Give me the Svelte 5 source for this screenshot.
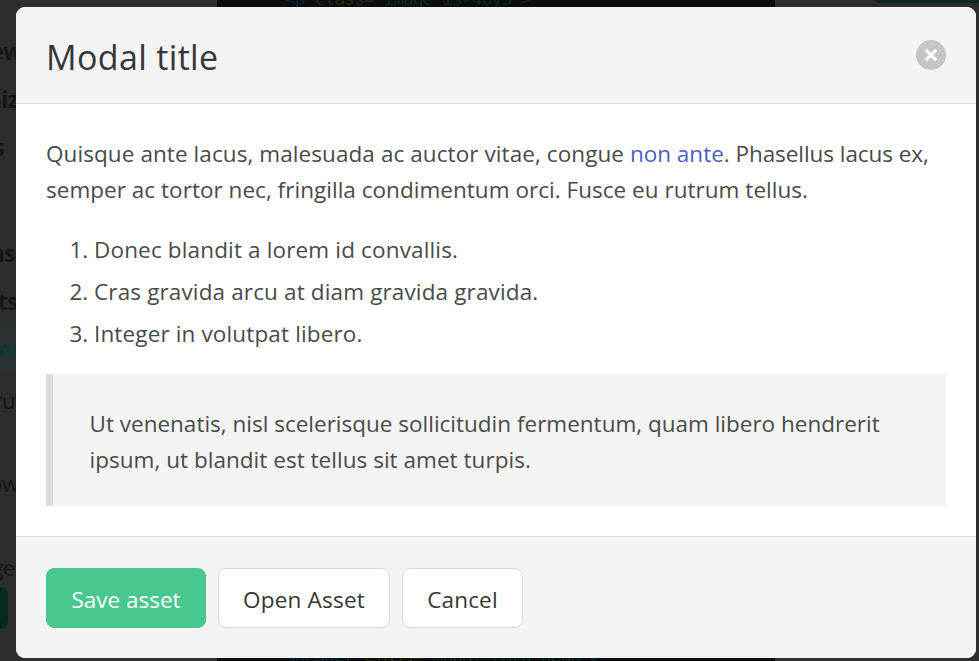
<script>
  const items = [
    { text: 'Donec blandit a lorem id convallis.', track: 0.15 },
    { text: 'Cras gravida arcu at diam gravida gravida.', track: 0.14 },
    { text: 'Integer in volutpat libero.', track: 0.14 }
  ];
  const buttons = [
    { text: 'Save asset', kind: 'success', width: 160, track: 0 },
    { text: 'Open Asset', kind: '', width: 172, track: 0.2 },
    { text: 'Cancel', kind: '', width: 121, track: 0.15 }
  ];
  const menu = [
    { text: 'Overview', top: 34, bold: true, edge: 22 },
    { text: 'Customize', top: 82, bold: true, edge: 31 },
    { text: 'Columns', top: 130, bold: true, edge: 4 },
    { text: 'Columns', top: 236, bold: true, edge: 15 },
    { text: 'Elements', top: 284, bold: true, edge: 18 },
    { text: 'Components', top: 332, bold: true, edge: 58, active: true },
    { text: 'Breadcru', top: 383, edge: 15 },
    { text: 'Dropdow', top: 466, edge: 19 },
    { text: 'Message', top: 550, edge: 15 }
  ];
</script>

<div class="screen">
  <div class="page" aria-hidden="true">
    <div class="active-row"></div>
    {#each menu as m}
      <span class="menu" class:bold={m.bold} class:active={m.active} style="top: {m.top}px; right: {979 - m.edge}px">{m.text}</span>
    {/each}
    <div class="code"></div>
    <div class="line first"><i class="tag">&lt;p</i> <i class="attr">class=</i><i class="str">"image is-4by3"</i><i class="tag">&gt;</i></div>
    <div class="line last"><i class="tag">&lt;header</i> <i class="attr">class=</i><i class="str">"modal-card-head"</i><i class="tag">&gt;</i></div>
    <div class="pill top"></div>
    <div class="pill side"></div>
  </div>

  <div class="card" role="dialog" aria-modal="true" aria-label="Modal title">
    <header>
      <p class="title">Modal title</p>
      <button class="close" aria-label="close">
        <svg viewBox="0 0 30 30" width="30" height="30"><path d="M9.7 9.7 20.3 20.3M20.3 9.7 9.7 20.3" stroke="#fff" stroke-width="3" fill="none" /></svg>
      </button>
    </header>
    <section>
      <p class="para">
        <span style="letter-spacing: 0.08px">Quisque ante lacus, malesuada ac auctor vitae, congue</span>{' '}<a href="#top">non ante</a><span style="letter-spacing: -0.059px">. Phasellus lacus ex,</span><br />
        <span style="letter-spacing: 0.029px">semper ac tortor nec, fringilla condimentum orci. Fusce eu rutrum tellus.</span>
      </p>
      <ol>
        {#each items as item}
          <li><span style="letter-spacing: {item.track}px">{item.text}</span></li>
        {/each}
      </ol>
      <blockquote>
        <span>Ut venenatis, nisl scelerisque sollicitudin fermentum, quam libero hendrerit</span><br />
        <span style="letter-spacing: 0.03px">ipsum, ut blandit est tellus sit amet turpis.</span>
      </blockquote>
    </section>
    <footer>
      {#each buttons as b}
        <button class="button {b.kind}" style="width: {b.width}px; letter-spacing: {b.track}px">{b.text}</button>
      {/each}
    </footer>
  </div>
</div>

<style>
  :global(body) {
    margin: 0;
    background: #2d2d2d;
  }
  .screen {
    position: relative;
    box-sizing: border-box;
    width: 979px;
    height: 661px;
    padding: 7px 3px 3px 16px;
    overflow: hidden;
    background: #2d2d2d;
    color: #4a4a4a;
    font: 22.5px/36px 'Open Sans', 'Noto Sans', sans-serif;
  }
  .page {
    position: absolute;
    inset: 0;
  }
  .menu {
    position: absolute;
    line-height: 36px;
    letter-spacing: -0.5px;
    white-space: nowrap;
    color: #161616;
  }
  .bold { font-weight: 700; }
  .active { color: #0a3a30; }
  .active-row {
    position: absolute;
    left: 0;
    top: 325px;
    width: 16px;
    height: 48px;
    background: #2b3132;
  }
  .code {
    position: absolute;
    left: 217px;
    top: 0;
    width: 558px;
    height: 661px;
    background: #0c0d0f;
  }
  .line {
    position: absolute;
    left: 285px;
    font: 18px/24px 'DejaVu Sans Mono', monospace;
    letter-spacing: -1px;
    white-space: pre;
  }
  .line i { font-style: normal; }
  .first { top: -13px; }
  .last { top: 644px; }
  .tag { color: #0b2635; }
  .attr { color: #2b2708; }
  .str { color: #10291f; }
  .pill {
    position: absolute;
    background: #082822;
    border-radius: 8px;
  }
  .pill.top {
    left: 872px;
    top: -40px;
    width: 120px;
    height: 43px;
  }
  .pill.side {
    left: -60px;
    top: 587px;
    width: 68px;
    height: 42px;
  }
  .card {
    position: relative;
    display: flex;
    flex-direction: column;
    height: 651px;
    overflow: hidden;
    border-radius: 9px;
    background: #fff;
  }
  header {
    display: flex;
    align-items: center;
    justify-content: space-between;
    box-sizing: border-box;
    height: 97px;
    padding: 0 30px;
    background: #f4f4f4;
    border-bottom: 1px solid #dbdbdb;
  }
  .title {
    margin: 4px 0 0;
    color: #363636;
    font-size: 34px;
    line-height: 36px;
    letter-spacing: 0.35px;
  }
  .close {
    width: 30px;
    height: 30px;
    padding: 0;
    border: 0;
    border-radius: 50%;
    background: #c5c5c5;
  }
  .close svg { display: block; }
  section {
    box-sizing: border-box;
    height: 432px;
    padding: 32px 30px 30px;
  }
  .para {
    margin: 0 0 24px;
    white-space: nowrap;
  }
  a {
    color: #485fc7;
    text-decoration: none;
  }
  ol {
    display: flex;
    flex-direction: column;
    gap: 6px;
    margin: 0 0 22px;
    padding-left: 48px;
  }
  blockquote {
    margin: 0;
    padding: 32px 36px 28px 36.5px;
    border-left: 7px solid #dbdbdb;
    background: #f4f4f4;
    white-space: nowrap;
  }
  footer {
    display: flex;
    gap: 12px;
    box-sizing: border-box;
    height: 122px;
    padding: 31px 30px 30px;
    border-top: 1px solid #dbdbdb;
    background: #f4f4f4;
  }
  .button {
    height: 60px;
    padding: 3px 0 0;
    border: 1px solid #dbdbdb;
    border-radius: 8px;
    background: #fff;
    color: #363636;
    font: inherit;
    white-space: nowrap;
  }
  .success {
    border-color: #48c78e;
    background: #48c78e;
    color: #fff;
  }
</style>
